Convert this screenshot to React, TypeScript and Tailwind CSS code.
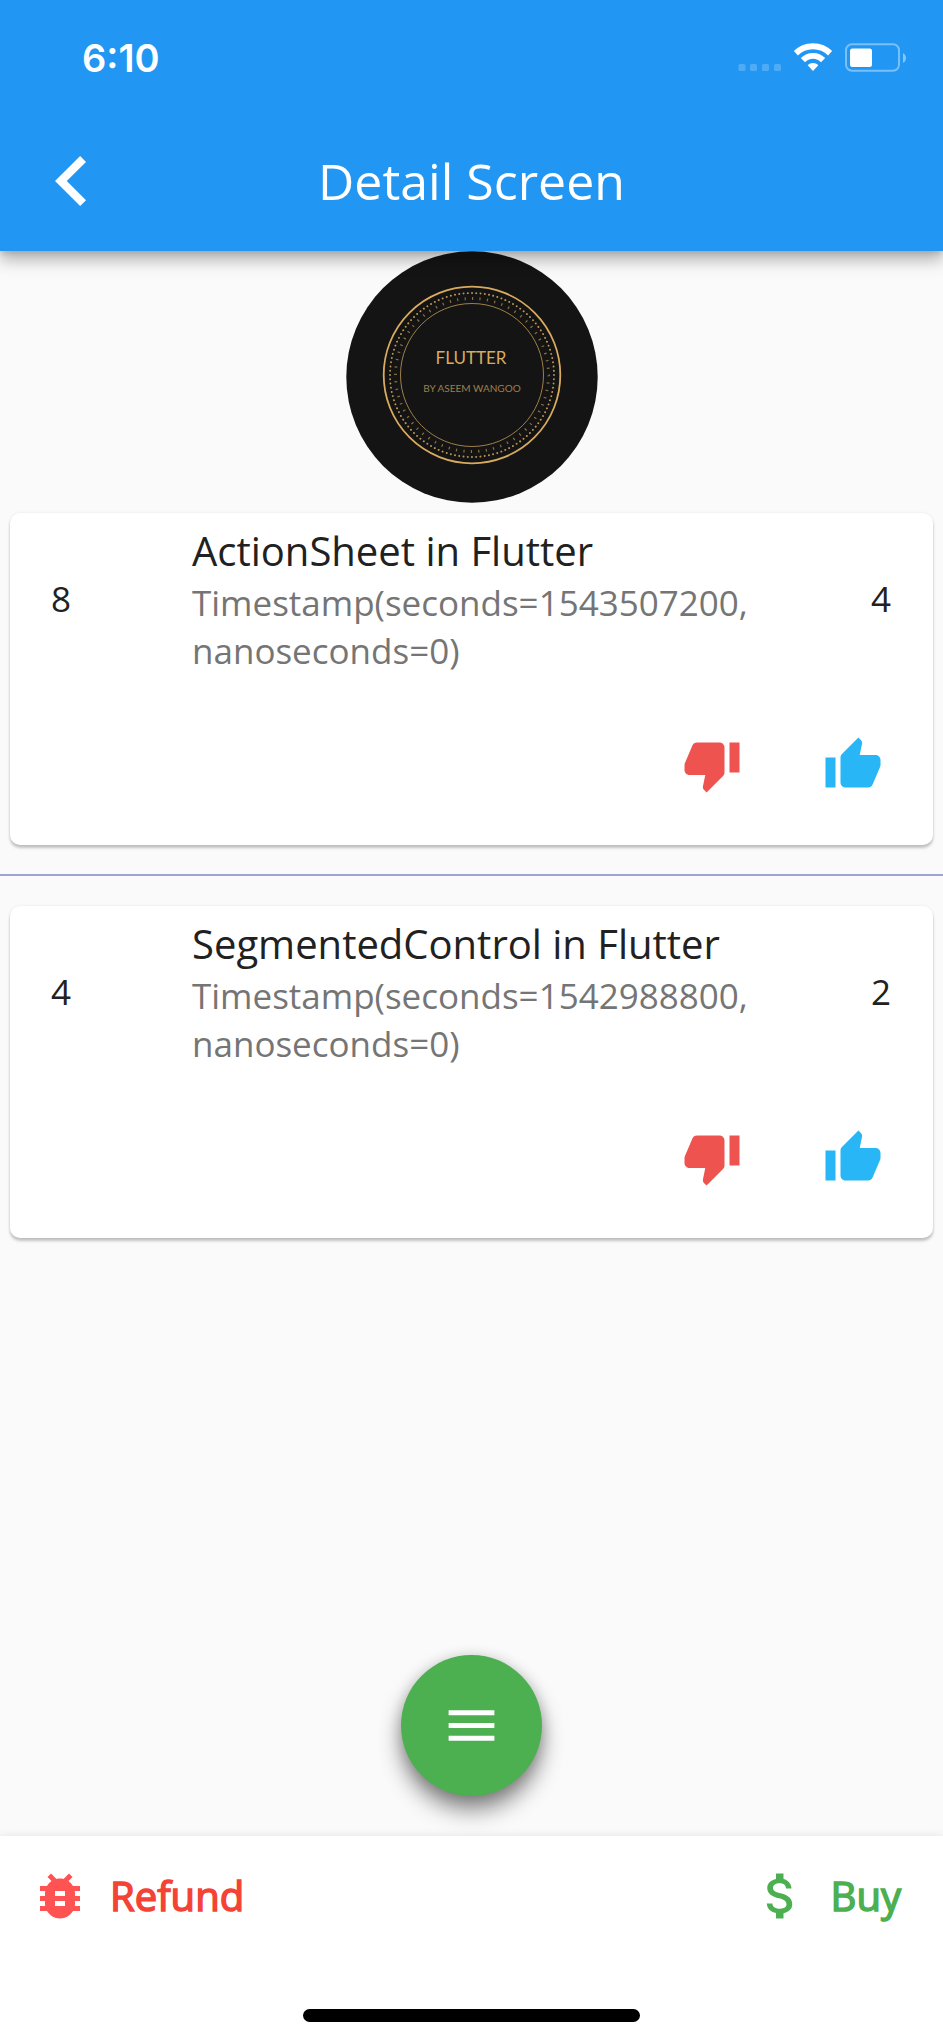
import React from "react";
import { MdThumbUp, MdThumbDown, MdBugReport, MdAttachMoney, MdMenu } from "react-icons/md";

type Post = { title: string; timestamp: string; left: number; right: number };

const posts: Post[] = [
  { title: "ActionSheet in Flutter", timestamp: "Timestamp(seconds=1543507200, nanoseconds=0)", left: 8, right: 4 },
  { title: "SegmentedControl in Flutter", timestamp: "Timestamp(seconds=1542988800, nanoseconds=0)", left: 4, right: 2 },
];

function StatusBar() {
  return (
    <div className="flex h-[111px] items-center justify-between pt-[4px] pr-[36px] pl-[82px]">
      <span className="font-['Inter',sans-serif] text-[38px] leading-[48px] font-semibold">6:10</span>
      <svg width="170" height="32" viewBox="0 0 170 32" fill="#fff" aria-hidden="true">
        <g opacity="0.2">
          <rect x="1.500" y="22" width="7" height="7" rx="1.500" />
          <rect x="13" y="22" width="7" height="7" rx="1.500" />
          <rect x="25" y="22" width="7" height="7" rx="1.500" />
          <rect x="37" y="22" width="7" height="7" rx="1.500" />
        </g>
        <path d="M76 1.300C83.700 1.300 90.300 4.200 95.100 9L91.100 13.400C87.100 9.400 81.800 7.200 76 7.200S64.900 9.400 60.900 13.400L56.900 9C61.700 4.200 68.300 1.300 76 1.300Z" />
        <path d="M76 10.900C80.900 10.900 84.900 12.800 88.200 15.900L84 20.200C81.900 18 79.200 16.800 76 16.800S70.100 18 68 20.200L63.800 15.900C67.100 12.800 71.100 10.900 76 10.900Z" />
        <path d="M76 20.900C78 20.900 79.900 21.700 81.300 23.200L76 29L70.700 23.200C72.100 21.700 74 20.900 76 20.900Z" />
        <rect x="109" y="2.200" width="53" height="26.600" rx="6" fill="none" stroke="#fff" strokeOpacity="0.4" strokeWidth="2" />
        <rect x="113" y="6.500" width="22" height="18.500" rx="2.500" />
        <path d="M166 11C170 13 170 19 166 21Z" opacity="0.45" />
      </svg>
    </div>
  );
}

function AppBar() {
  return (
    <header className="relative z-10 bg-[#2196f3] text-white shadow-[0_10px_14px_rgba(0,0,0,0.26),0_2px_6px_rgba(0,0,0,0.14)]">
      <StatusBar />
      <div className="grid h-[140px] grid-cols-[140px_1fr_140px] items-center">
        <button type="button" aria-label="Back" className="flex h-[140px] items-center pl-[55px]">
          <svg width="60" height="60" viewBox="0 0 24 24" fill="currentColor" aria-hidden="true">
            <path d="M12.400 4.350L10.050 2 0 12l10.050 10 2.350-2.350L4.700 12z" />
          </svg>
        </button>
        <h1 className="text-center text-[50px] leading-[68px]">Detail Screen</h1>
      </div>
    </header>
  );
}

function Avatar() {
  return (
    <svg className="mx-auto block" width="252" height="252" viewBox="0 0 252 252" role="img" aria-label="Flutter by Aseem Wangoo">
      <circle cx="126" cy="126" r="125.700" fill="#141414" />
      <g fill="none" stroke="#d9ab5e">
        <circle cx="126" cy="124" r="88.300" strokeWidth="1.800" />
        <circle cx="126" cy="124" r="82" strokeWidth="1.900" strokeLinecap="round" pathLength="720" strokeDasharray="0.100 5.900" opacity="0.85" />
        <circle cx="126" cy="124" r="76.500" strokeWidth="2.800" pathLength="720" strokeDasharray="1.800 9.450" opacity="0.6" />
        <circle cx="126" cy="124" r="71.500" strokeWidth="1" opacity="0.7" />
      </g>
      <g fill="#d9ab5e" textAnchor="middle" className="font-['Lato',sans-serif]">
        <text x="125" y="113" fontSize="17">FLUTTER</text>
        <text x="126" y="141" fontSize="10" opacity="0.7">BY ASEEM WANGOO</text>
      </g>
    </svg>
  );
}

function PostCard({ post }: { post: Post }) {
  return (
    <article className="m-[10px] rounded-[10px] bg-white shadow-[0_3px_3px_rgba(0,0,0,0.22),0_0_3px_rgba(0,0,0,0.08)]">
      <div className="flex items-center py-[10px] pr-[42px] pl-[41px] text-[35px] leading-[48px] text-[#212121]">
        <span className="w-[141px] shrink-0">{post.left}</span>
        <div className="min-w-0 flex-1 pr-[40px]">
          <h2 className="text-[40px] leading-[56px]">{post.title}</h2>
          <p className="text-[#757575]">{post.timestamp}</p>
        </div>
        <span>{post.right}</span>
      </div>
      <div className="flex justify-end gap-[81px] p-[50px]">
        <button type="button" aria-label="Dislike" className="text-[#ef5350]">
          <MdThumbDown size={60} />
        </button>
        <button type="button" aria-label="Like" className="text-[#29b6f6]">
          <MdThumbUp size={60} />
        </button>
      </div>
    </article>
  );
}

export default function App() {
  return (
    <div className="flex min-h-screen flex-col bg-[#fafafa] font-['Open_Sans',sans-serif]">
      <AppBar />
      <main className="flex flex-1 flex-col">
        <Avatar />
        {posts.map((post, i) => (
          <React.Fragment key={post.title}>
            {i > 0 && <hr className="mt-[19px] mb-[20px] border-t-2 border-[#9da4d3]" />}
            <PostCard post={post} />
          </React.Fragment>
        ))}
        <button
          type="button"
          aria-label="Menu"
          className="mx-auto mt-auto mb-[40px] flex size-[141px] items-center justify-center rounded-full bg-[#4caf50] text-white shadow-[0_14px_22px_rgba(0,0,0,0.45),0_2px_14px_rgba(0,0,0,0.16)]"
        >
          <MdMenu size={61} />
        </button>
      </main>
      <footer className="bg-white shadow-[0_-1px_8px_rgba(0,0,0,0.08)]">
        <div className="flex h-[120px] items-center justify-between pr-[42px] pl-[30px] text-[40px] leading-[54px]">
          <button type="button" className="flex items-center gap-[20px] text-[#f44336]">
            <MdBugReport size={60} className="text-[#ff5252]" />
            <span className="[-webkit-text-stroke:1.500px_currentColor]">Refund</span>
          </button>
          <button type="button" className="flex items-center gap-[20px] text-[#4caf50]">
            <MdAttachMoney size={60} />
            <span className="[-webkit-text-stroke:1.500px_currentColor]">Buy</span>
          </button>
        </div>
        <div className="mx-auto mt-[53px] mb-[20px] h-[13px] w-[337px] rounded-full bg-black" />
      </footer>
    </div>
  );
}
